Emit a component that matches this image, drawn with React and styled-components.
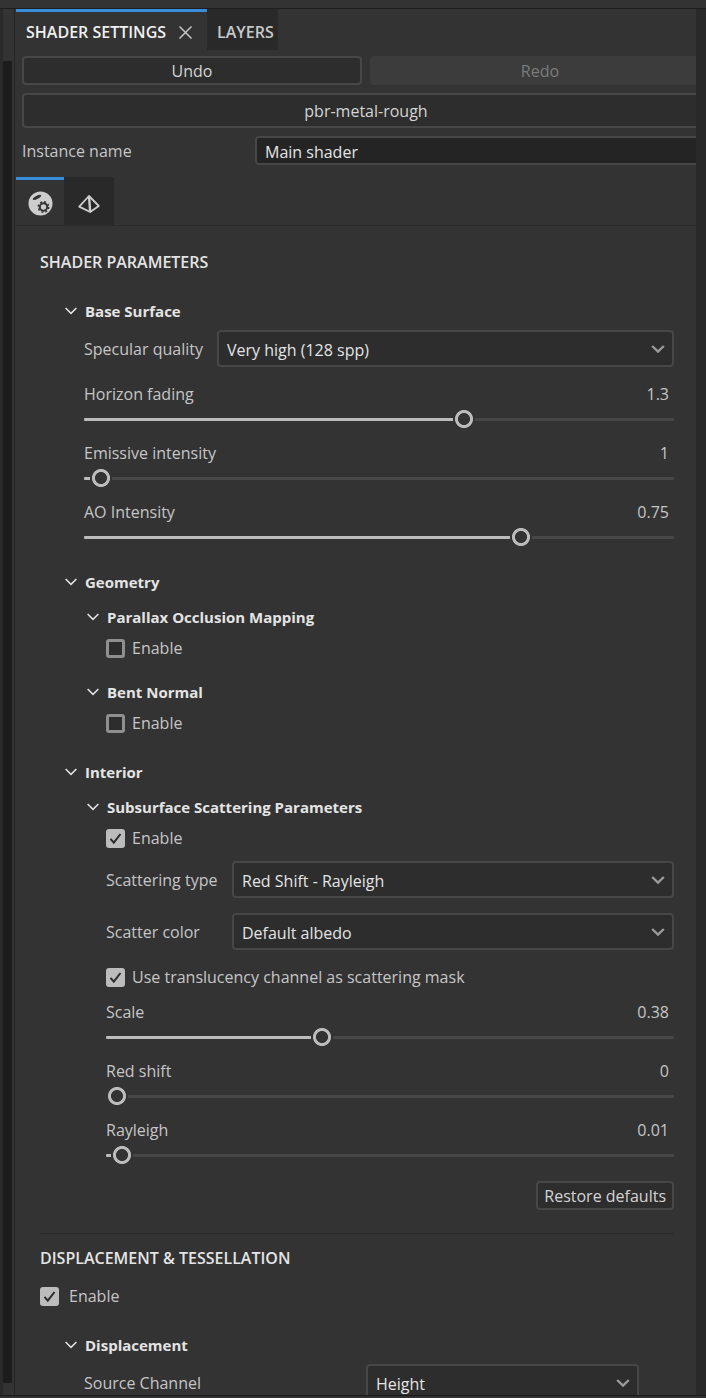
import React, { useState } from 'react';
import styled, { createGlobalStyle, css } from 'styled-components';

const GlobalStyle = createGlobalStyle`
	* {
		box-sizing: border-box;
	}
	:root {
		--panel: #333333;
		--well: #2d2d2d;
		--tab: #292929;
		--line: #474747;
		--accent: #378ddb;
		--label: #c6c6c6;
		--bright: #e4e4e4;
	}
	body {
		margin: 0;
		background: var(--panel);
		color: var(--label);
		font: 16px/24px 'Open Sans', 'Noto Sans', sans-serif;
	}
	button,
	input,
	select {
		font: inherit;
		margin: 0;
	}
`;

const Window = styled.div`
	display: flex;
	flex-direction: column;
	height: 100vh;
	overflow: hidden;
`;

const TopStrip = styled.div`
	flex: none;
	height: 9px;
	border-bottom: 1px solid #1e1e1e;
`;

const BottomStrip = styled.div`
	flex: none;
	height: 3px;
	border-top: 1px solid #1b1b1b;
	background: #303030;
`;

const Body = styled.div`
	display: flex;
	flex: 1;
	min-height: 0;
`;

const LeftGutter = styled.div`
	flex: none;
	display: flex;
	width: 15px;
	padding: 52px 2px 12px 0;
	border-left: 3px solid #2a2a2a;
	border-right: 1px solid #252525;
`;

const ScrollTrack = styled.div`
	flex: 1;
	background: #1c1c1c;
`;

const RightGutter = styled.div`
	flex: none;
	width: 10px;
	background: #292929;
`;

const Panel = styled.main`
	flex: 1;
	min-width: 0;
	overflow: hidden;
`;

const TabBar = styled.div`
	display: flex;
	height: 41px;
	padding-left: 1px;
`;

const Tab = styled.div`
	display: flex;
	align-items: center;
	padding: 2px ${props => (props.$active ? '15px' : '4px')} 0 10px;
	gap: 13px;
	border-top: 3px solid ${props => (props.$active ? 'var(--accent)' : 'var(--tab)')};
	background: ${props => (props.$active ? 'transparent' : 'var(--tab)')};
`;

const TabButton = styled.button`
	padding: 0;
	border: 0;
	background: none;
	color: ${props => (props.$active ? '#f0f0f0' : '#c8c8c8')};
	font-weight: 600;
	white-space: nowrap;
`;

const CloseButton = styled.button`
	display: flex;
	padding: 0;
	border: 0;
	background: none;
	color: var(--label);
`;

/* runs on past the right edge of the dock, which cuts it off */
const Toolbar = styled.div`
	display: grid;
	gap: 8px;
	padding: 6px 0 0 7px;
	margin-right: -14px;
`;

const ButtonPair = styled.div`
	display: grid;
	grid-template-columns: 1fr 1fr;
	gap: 8px;
`;

const Button = styled.button`
	height: ${props => (props.$tall ? '35px' : '29px')};
	padding: 1px 6px 0;
	border: 2px solid var(--line);
	border-radius: 4px;
	background: var(--well);
	color: #d4d4d4;
	line-height: 24px;
	&:disabled {
		border-color: #3c3c3c;
		background: #3c3c3c;
		color: #7b7b7b;
	}
`;

const NameRow = styled.div`
	display: grid;
	grid-template-columns: 233px 1fr;
	align-items: center;
`;

const TextInput = styled.input`
	min-width: 0;
	height: 29px;
	padding: 2px 8px 0;
	border: 2px solid var(--line);
	border-radius: 4px;
	background: #242424;
	color: var(--bright);
`;

const IconTabs = styled.div`
	display: flex;
	height: 49px;
	margin-top: 12px;
	padding-left: 1px;
	border-bottom: 1px solid #2b2b2b;
`;

const IconTab = styled.button`
	display: flex;
	align-items: center;
	justify-content: center;
	width: ${props => (props.$active ? '48px' : '50px')};
	padding: 2px 0 0;
	border: 0;
	border-top: 3px solid ${props => (props.$active ? 'var(--accent)' : 'var(--tab)')};
	background: ${props => (props.$active ? 'transparent' : 'var(--tab)')};
	color: #cdcdcd;
`;

const Section = styled.section`
	margin: 0 22px 0 25px;
	padding-top: ${props => (props.$divided ? '12px' : '24px')};
	${props =>
		props.$divided &&
		css`
			margin-top: 23px;
			border-top: 1px solid #292929;
		`}
`;

const SectionTitle = styled.h2`
	margin: 0;
	color: var(--bright);
	font-size: 16px;
	font-weight: 600;
	line-height: 24px;
`;

const SectionBody = styled.div`
	padding-top: 14px;
`;

const GroupBox = styled.div`
	margin-top: ${props => props.$space || '25px'};
	padding-left: ${props => (props.$nested ? '22px' : '25px')};
`;

const GroupTitle = styled.h3`
	margin: 0;
	font-size: 15px;
	font-weight: 700;
	line-height: 24px;
`;

const GroupToggle = styled.button`
	display: flex;
	align-items: center;
	gap: 8px;
	padding: 0;
	border: 0;
	background: none;
	color: var(--bright);
`;

const GroupBody = styled.div`
	padding: 7px 0 0 19px;
`;

const ChoiceRow = styled.div`
	display: grid;
	grid-template-columns: ${props => props.$labelWidth} 1fr;
	align-items: center;
	margin: 0 ${props => (props.$inset ? '35px' : '0')} 15px 0;
`;

const SelectBox = styled.div`
	display: grid;
	align-items: center;
	& > * {
		grid-area: 1 / 1;
	}
	& > svg {
		justify-self: end;
		margin-right: 9px;
		color: #9a9a9a;
		pointer-events: none;
	}
`;

const Select = styled.select`
	appearance: none;
	width: 100%;
	height: 37px;
	padding: 3px 30px 0 8px;
	border: 2px solid var(--line);
	border-radius: 4px;
	background: var(--well);
	color: var(--bright);
`;

const CheckRow = styled.label`
	display: flex;
	align-items: center;
	gap: ${props => (props.$wide ? '10px' : '7px')};
	height: 24px;
	margin-bottom: 11px;
`;

const CheckBox = styled.span`
	display: grid;
	place-items: center;
	& > * {
		grid-area: 1 / 1;
	}
	& > svg {
		color: #2b2b2b;
		pointer-events: none;
	}
`;

const CheckInput = styled.input`
	appearance: none;
	width: 19px;
	height: 19px;
	border: 3px solid #8f8f8f;
	border-radius: 3px;
	background: var(--well);
	&:checked {
		border-color: #bcbcbc;
		background: #bcbcbc;
	}
`;

const SliderRow = styled.div`
	margin-bottom: 9px;
`;

const SliderHead = styled.div`
	display: flex;
	justify-content: space-between;
	height: 24px;
	padding-right: 5px;
`;

const Range = styled.input`
	appearance: none;
	display: block;
	width: 100%;
	height: 26px;
	background: none;
	&::-webkit-slider-runnable-track {
		height: 3px;
		border-radius: 1px;
		background: linear-gradient(
			to right,
			#bcbcbc calc(11px + (100% - 22px) * var(--fill)),
			var(--line) calc(11px + (100% - 22px) * var(--fill))
		);
	}
	&::-webkit-slider-thumb {
		appearance: none;
		width: 22px;
		height: 22px;
		margin-top: -10px;
		background: radial-gradient(
			circle,
			var(--panel) 5.6px,
			#bcbcbc 6.4px,
			#bcbcbc 8.6px,
			var(--panel) 9.4px
		);
	}
`;

const Footer = styled.div`
	display: flex;
	justify-content: flex-end;
	padding-top: 4px;
`;

const Chevron = ({ bold }) => (
	<svg width={bold ? 14 : 12} height="8" viewBox={bold ? '0 0 14 8' : '0 0 12 8'} fill="none" stroke="currentColor">
		<path d={bold ? 'M1.2 1l5.8 5.6L12.8 1' : 'M0.6 1L6 6.4 11.4 1'} strokeWidth={bold ? 2.4 : 1.5} />
	</svg>
);

const CloseIcon = () => (
	<svg width="13" height="13" viewBox="0 0 13 13" fill="none" stroke="currentColor" strokeWidth="1.5">
		<path d="M.5.5l12 12M12.5.5l-12 12" />
	</svg>
);

const CheckIcon = () => (
	<svg width="13" height="13" viewBox="0 0 13 13" fill="none" stroke="currentColor" strokeWidth="2">
		<path d="M1.5 6.8L4.8 10.6 11.5 2" />
	</svg>
);

const MaterialIcon = () => (
	<svg width="25" height="25" viewBox="0 0 25 25">
		<circle cx="12.5" cy="12.5" r="12" fill="currentColor" />
		<ellipse cx="9" cy="6.4" rx="4.6" ry="1.6" transform="rotate(-27 9 6.4)" fill="#333" />
		<circle cx="15.5" cy="16" r="3.7" fill="none" stroke="#333" strokeWidth="2" />
		<circle cx="15.5" cy="16" r="5.2" fill="none" stroke="#333" strokeWidth="1.6" strokeDasharray="2 2.08" />
	</svg>
);

const MeshIcon = () => (
	<svg width="22" height="18" viewBox="0 0 22 18" fill="none" stroke="currentColor" strokeWidth="1.8" strokeLinejoin="round">
		<path d="M11 1L1.2 11.6 12.2 17 20.8 11z" />
		<path d="M11 1l1.2 16" strokeWidth="2.4" />
	</svg>
);

const Group = ({ title, nested, space, children }) => {
	const [open, setOpen] = useState(true);
	return (
		<GroupBox $nested={nested} $space={space}>
			<GroupTitle>
				<GroupToggle type="button" aria-expanded={open} onClick={() => setOpen(!open)}>
					<Chevron />
					{title}
				</GroupToggle>
			</GroupTitle>
			{open ? children : null}
		</GroupBox>
	);
};

const Choice = ({ id, label, options, labelWidth, inset }) => (
	<ChoiceRow $labelWidth={labelWidth} $inset={inset}>
		<label htmlFor={id}>{label}</label>
		<SelectBox>
			<Select id={id}>
				{options.map(value => (
					<option key={value}>{value}</option>
				))}
			</Select>
			<Chevron bold />
		</SelectBox>
	</ChoiceRow>
);

const Check = ({ label, checked, wide }) => {
	const [on, setOn] = useState(Boolean(checked));
	return (
		<CheckRow $wide={wide}>
			<CheckBox>
				<CheckInput type="checkbox" checked={on} onChange={e => setOn(e.target.checked)} />
				{on ? <CheckIcon /> : null}
			</CheckBox>
			{label}
		</CheckRow>
	);
};

const Slider = ({ id, label, initial, max }) => {
	const [value, setValue] = useState(initial);
	return (
		<SliderRow>
			<SliderHead>
				<label htmlFor={id}>{label}</label>
				<output htmlFor={id}>{Number(value.toFixed(2))}</output>
			</SliderHead>
			<Range
				id={id}
				type="range"
				min="0"
				max={max}
				step="any"
				value={value}
				onChange={e => setValue(Number(e.target.value))}
				style={{ '--fill': value / max }}
			/>
		</SliderRow>
	);
};

const surfaceSliders = [
	{ id: 'horizon', label: 'Horizon fading', initial: 1.3, max: 2 },
	{ id: 'emissive', label: 'Emissive intensity', initial: 1, max: 100 },
	{ id: 'ao', label: 'AO Intensity', initial: 0.75, max: 1 }
];

const scatterSliders = [
	{ id: 'scale', label: 'Scale', initial: 0.375, max: 1 },
	{ id: 'redshift', label: 'Red shift', initial: 0, max: 1 },
	{ id: 'rayleigh', label: 'Rayleigh', initial: 0.01, max: 1 }
];

const App = () => (
	<>
		<GlobalStyle />
		<Window>
			<TopStrip />
			<Body>
				<LeftGutter>
					<ScrollTrack />
				</LeftGutter>
				<Panel>
					<TabBar>
						<Tab $active>
							<TabButton type="button" $active>
								SHADER SETTINGS
							</TabButton>
							<CloseButton type="button" aria-label="Close">
								<CloseIcon />
							</CloseButton>
						</Tab>
						<Tab>
							<TabButton type="button">LAYERS</TabButton>
						</Tab>
					</TabBar>
					<Toolbar>
						<ButtonPair>
							<Button type="button">Undo</Button>
							<Button type="button" disabled>
								Redo
							</Button>
						</ButtonPair>
						<Button type="button" $tall>
							pbr-metal-rough
						</Button>
						<NameRow>
							<label htmlFor="instance">Instance name</label>
							<TextInput id="instance" type="text" defaultValue="Main shader" />
						</NameRow>
					</Toolbar>
					<IconTabs>
						<IconTab type="button" $active aria-label="Material">
							<MaterialIcon />
						</IconTab>
						<IconTab type="button" aria-label="Mesh">
							<MeshIcon />
						</IconTab>
					</IconTabs>
					<Section>
						<SectionTitle>SHADER PARAMETERS</SectionTitle>
						<Group title="Base Surface">
							<GroupBody>
								<Choice id="specular" label="Specular quality" labelWidth="133px" options={['Very high (128 spp)']} />
								{surfaceSliders.map(s => (
									<Slider key={s.id} {...s} />
								))}
							</GroupBody>
						</Group>
						<Group title="Geometry" space="20px">
							<Group title="Parallax Occlusion Mapping" nested space="11px">
								<GroupBody>
									<Check label="Enable" />
								</GroupBody>
							</Group>
							<Group title="Bent Normal" nested space="20px">
								<GroupBody>
									<Check label="Enable" />
								</GroupBody>
							</Group>
						</Group>
						<Group title="Interior">
							<Group title="Subsurface Scattering Parameters" nested space="11px">
								<GroupBody>
									<Check label="Enable" checked />
									<Choice id="type" label="Scattering type" labelWidth="126px" options={['Red Shift - Rayleigh']} />
									<Choice id="color" label="Scatter color" labelWidth="126px" options={['Default albedo']} />
									<Check label="Use translucency channel as scattering mask" checked />
									{scatterSliders.map(s => (
										<Slider key={s.id} {...s} />
									))}
								</GroupBody>
							</Group>
						</Group>
						<Footer>
							<Button type="button">Restore defaults</Button>
						</Footer>
					</Section>
					<Section $divided>
						<SectionTitle>DISPLACEMENT &amp; TESSELLATION</SectionTitle>
						<SectionBody>
							<Check label="Enable" checked wide />
						</SectionBody>
						<Group title="Displacement">
							<GroupBody>
								<Choice id="source" label="Source Channel" labelWidth="282px" inset options={['Height']} />
							</GroupBody>
						</Group>
					</Section>
				</Panel>
				<RightGutter />
			</Body>
			<BottomStrip />
		</Window>
	</>
);

export default App;
